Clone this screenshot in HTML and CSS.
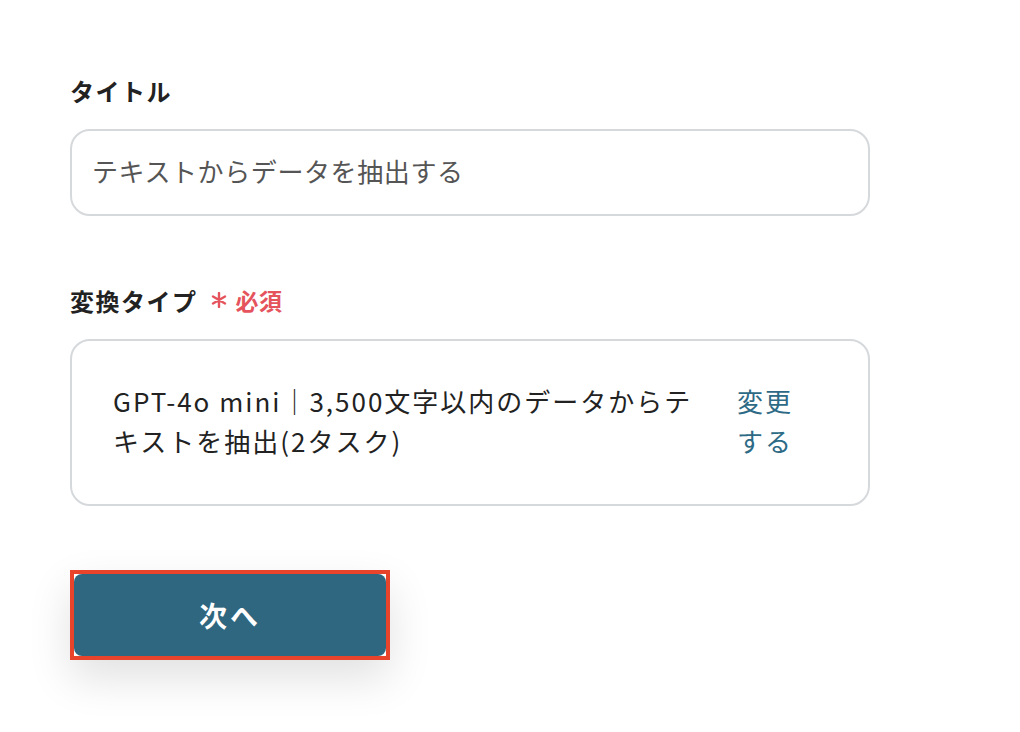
FILE: index.html
```html
<!DOCTYPE html>
<html lang="ja">
<head>
    <meta charset="UTF-8">
    <meta name="viewport" content="width=device-width, initial-scale=1.0">
    <title>変換設定</title>
    <link rel="stylesheet" href="styles.css">
</head>
<body>
    <div class="form">
        <div class="field">
            <div class="label">タイトル</div>
            <div class="input">テキストからデータを抽出する</div>
        </div>

        <div class="field">
            <div class="label">変換タイプ
                <span class="required">
                    <svg class="star" width="16" height="16" viewBox="0 0 16 16">
                        <path d="M8 1v14M2 4.5l12 7M14 4.5l-12 7" stroke="#e5535c" stroke-width="2.4" stroke-linecap="round"/>
                    </svg>必須</span>
            </div>
            <div class="select-box">
                <div class="select-text">GPT-4o mini｜3,500文字以内のデータからテキストを抽出(2タスク)</div>
                <a class="change-link" href="#">変更する</a>
            </div>
        </div>

        <div class="actions">
            <div class="highlight">
                <button class="next-button">次へ</button>
            </div>
        </div>
    </div>
</body>
</html>
```

FILE: styles.css
```css
body {
    margin: 0;
    background-color: #fff;
    font-family: "Noto Sans CJK JP", "Noto Sans", sans-serif;
    color: #222;
}

.form {
    width: 800px;
    padding: 70px 0 80px 70px;
}

.field {
    margin-bottom: 64px;
}

.label {
    display: flex;
    align-items: center;
    height: 40px;
    margin-bottom: 19px;
    font-size: 24px;
    font-weight: bold;
    letter-spacing: 1.5px;
    color: #222;
}

.required {
    display: flex;
    align-items: center;
    margin-left: 13px;
    font-size: 23px;
    font-weight: bold;
    letter-spacing: 0.5px;
    color: #e5535c;
}

.star {
    margin-right: 9px;
}

.input {
    box-sizing: border-box;
    height: 87px;
    display: flex;
    align-items: center;
    padding: 0 20px 4px;
    border: 2px solid #d6d9dc;
    border-radius: 20px;
    font-size: 26px;
    letter-spacing: 0.6px;
    color: #555;
}

.select-box {
    box-sizing: border-box;
    height: 167px;
    display: flex;
    align-items: center;
    gap: 23px;
    padding: 0 71px 3px 41px;
    border: 2px solid #d6d9dc;
    border-radius: 20px;
}

.select-text {
    flex: 1;
    font-size: 26px;
    line-height: 40px;
    letter-spacing: 2px;
    color: #222;
}

.change-link {
    width: 60px;
    font-size: 26px;
    line-height: 40px;
    letter-spacing: 2px;
    color: #2d6a86;
    text-decoration: none;
}

.highlight {
    display: inline-block;
    border: 4px solid #e8432b;
    box-shadow: 0 18px 44px rgba(0, 0, 0, 0.12);
}

.next-button {
    display: block;
    width: 312px;
    height: 82px;
    border: none;
    border-radius: 8px;
    background-color: #2f6780;
    color: #fff;
    font-family: inherit;
    font-size: 28px;
    font-weight: bold;
    letter-spacing: 3px;
    cursor: pointer;
}
```
